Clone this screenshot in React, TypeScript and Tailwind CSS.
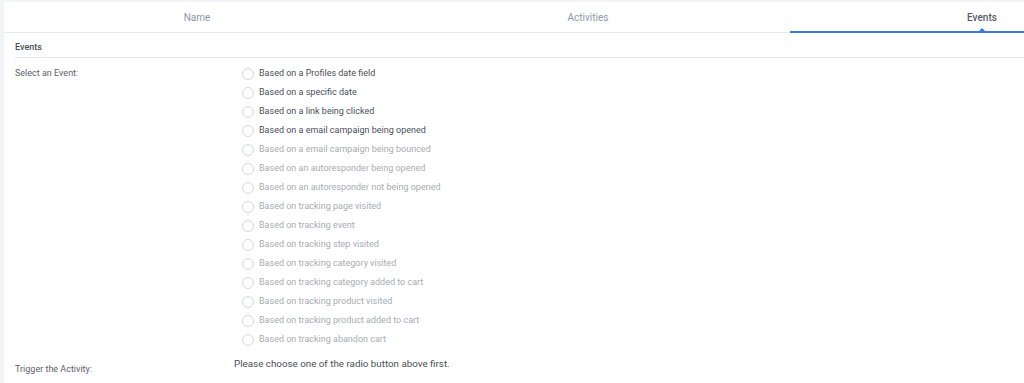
import React from "react";

const items: { label: string; active: boolean }[] = [
  { label: "Based on a Profiles date field", active: true },
  { label: "Based on a specific date", active: true },
  { label: "Based on a link being clicked", active: true },
  { label: "Based on a email campaign being opened", active: true },
  { label: "Based on a email campaign being bounced", active: false },
  { label: "Based on an autoresponder being opened", active: false },
  { label: "Based on an autoresponder not being opened", active: false },
  { label: "Based on tracking page visited", active: false },
  { label: "Based on tracking event", active: false },
  { label: "Based on tracking step visited", active: false },
  { label: "Based on tracking category visited", active: false },
  { label: "Based on tracking category added to cart", active: false },
  { label: "Based on tracking product visited", active: false },
  { label: "Based on tracking product added to cart", active: false },
  { label: "Based on tracking abandon cart", active: false },
];

export default function App() {
  return (
    <div
      className="flex h-[383px] w-[1024px] overflow-hidden bg-white text-[9px] text-[#5a5f69]"
      style={{ fontFamily: "Roboto, 'Liberation Sans', sans-serif" }}
    >
      <div className="w-[4px] shrink-0 bg-[#f3f4f8]" />
      <div className="flex min-w-0 flex-1 flex-col border-t-2 border-[#f3f4f8]">
        {/* Tabs */}
        <div className="flex h-[31px] shrink-0 border-b border-[#e6e8ee] text-[10px]">
          <div className="flex w-[386px] shrink-0 items-center justify-center text-[#8e97a8]">Name</div>
          <div className="flex w-[396px] shrink-0 items-center justify-center text-[#8e97a8]">Activities</div>
          <div className="relative flex w-[392px] shrink-0 items-center justify-center text-[#555b66]">
            <span className="font-medium">Events</span>
            <div className="absolute bottom-[-1px] left-[4px] right-0 h-[2px] bg-[#3b7bde]" />
            <div className="absolute bottom-[0px] left-1/2 h-0 w-0 -translate-x-1/2 border-x-[4px] border-b-[4px] border-x-transparent border-b-[#3b7bde]" />
          </div>
        </div>

        <div className="flex flex-col pl-[11px]">
          <div className="flex h-[25px] items-end border-b border-[#e6e8ee] pb-[3px] text-[9px] font-medium text-[#4a4f58]">
            Events
          </div>

          <div className="mt-[6px] flex">
            <div className="w-[227px] shrink-0 leading-[19px] text-[#5a5f69]">Select an Event:</div>
            <div className="flex flex-col">
              {items.map((it) => (
                <label key={it.label} className="flex h-[19px] items-center">
                  <span className="h-[12px] w-[12px] rounded-full border border-[#d3d6dc] bg-white" />
                  <span className={"ml-[5px] " + (it.active ? "text-[#4a4f58]" : "text-[#a7abb3]")}>
                    {it.label}
                  </span>
                </label>
              ))}
            </div>
          </div>

          <div className="mt-[7px] flex">
            <div className="w-[219px] shrink-0 pt-[6px] leading-[14px] text-[#5a5f69]">Trigger the Activity:</div>
            <div className="text-[9.8px] leading-[15px] text-[#4a4f58]">Please choose one of the radio button above first.</div>
          </div>
        </div>
      </div>
    </div>
  );
}
